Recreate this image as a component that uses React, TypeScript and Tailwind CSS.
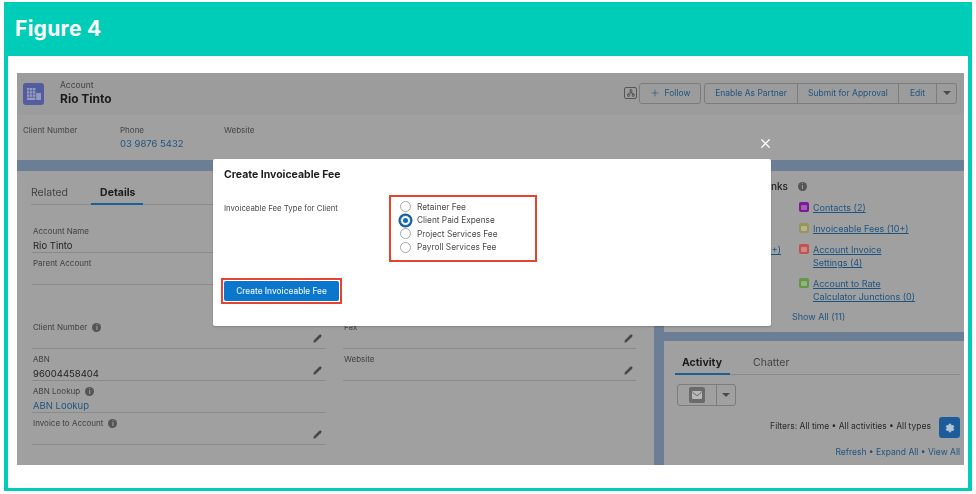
import { Plus, X, Pencil, Settings, Network } from "lucide-react"

const font = "font-['Inter','Liberation_Sans',sans-serif]"

function InfoDot({ className = "ml-[5px]" }: { className?: string }) {
  return (
    <span className={`inline-flex h-[9px] w-[9px] shrink-0 items-center justify-center rounded-full bg-[#555] text-[7px] font-bold leading-none text-[#a0a0a0] ${className}`}>
      i
    </span>
  )
}

function Caret() {
  return <span className="h-0 w-0 border-x-[4px] border-t-[4px] border-x-transparent border-t-[#4a4a4a]" />
}

function Field({ label, value, link, info, edit = true }: { label: string; value?: string; link?: boolean; info?: boolean; edit?: boolean }) {
  return (
    <div className="relative h-[32px] border-b border-[#8a8a8a] pl-[1px] pt-[4px]">
      <div className="flex h-[12px] items-center text-[8px] leading-none text-[#3f3f3f]">
        {label}
        {info && <InfoDot />}
      </div>
      {value && (
        <div className={`mt-[2.5px] text-[9.5px] leading-[12px] ${link ? "text-[#1e5480]" : "text-[#222]"}`}>{value}</div>
      )}
      {edit && (
        <Pencil className="absolute bottom-[5px] right-[3px] h-[9px] w-[9px] fill-[#444] text-[#444]" strokeWidth={1.5} />
      )}
    </div>
  )
}

function QuickLink({ color, lines }: { color: string; lines: string[] }) {
  return (
    <div className="flex gap-[4px]">
      <span className={`mt-[1px] flex h-[10px] w-[10px] shrink-0 items-center justify-center rounded-[2px] ${color}`}>
        <span className="h-[5px] w-[6px] rounded-[1px] bg-white/30" />
      </span>
      <div className="text-[9px] leading-[13px] text-[#1e5480] underline">
        {lines.map((line) => (
          <div key={line}>{line}</div>
        ))}
      </div>
    </div>
  )
}

function Radio({ label, checked }: { label: string; checked?: boolean }) {
  return (
    <div className="flex h-[13.6px] items-center">
      <span
        className={`flex h-[11px] w-[11px] items-center justify-center rounded-full border bg-white ${
          checked ? "border-[#0a6fc2] shadow-[0_0_0_1.5px_#1b5f96]" : "border-[#a8a8a8]"
        }`}
      >
        {checked && <span className="h-[5px] w-[5px] rounded-full bg-[#0a70c5]" />}
      </span>
      <span className="ml-[6px] text-[8.3px] text-[#4a4a4a]">{label}</span>
    </div>
  )
}

export default function App() {
  return (
    <div className={`h-[494px] w-[976px] overflow-hidden bg-white pb-[3px] pl-[4px] pr-[4px] pt-[2px] ${font}`}>
      <div className="flex h-full flex-col bg-[#00cdb7] px-[4px] pb-[3px]">
        <div className="flex h-[54px] items-center pb-[1px] pl-[7px] text-[21px] font-bold tracking-[0.3px] text-white">Figure 4</div>
        <div className="flex-1 bg-white pb-[23px] pl-[9px] pr-[4px] pt-[17px]">
          <div className="relative flex h-[392px] flex-col overflow-hidden bg-[#a0a0a0] blur-[0.3px]">
            {/* record header */}
            <div className="flex h-[42px] shrink-0 items-center bg-[#9c9c9c] pl-[6px] pr-[7px]">
              <div className="flex h-[22px] w-[21px] items-center justify-center rounded-[3px] bg-[#535c9c]">
                <svg viewBox="0 0 14 12" className="h-[12px] w-[14px]" fill="#9499c0">
                  <rect x="0" y="0" width="2.4" height="2.4" />
                  <rect x="3" y="0" width="2.4" height="2.4" />
                  <rect x="6" y="0" width="2.4" height="2.4" />
                  <rect x="0" y="3.2" width="2.4" height="2.4" />
                  <rect x="3" y="3.2" width="2.4" height="2.4" />
                  <rect x="6" y="3.2" width="2.4" height="2.4" />
                  <rect x="0" y="6.4" width="2.4" height="2.4" />
                  <rect x="3" y="6.4" width="2.4" height="2.4" />
                  <rect x="6" y="6.4" width="2.4" height="2.4" />
                  <rect x="0" y="9.6" width="8.4" height="2.4" />
                  <rect x="9.2" y="5" width="4.8" height="7" />
                </svg>
              </div>
              <div className="mb-[3px] ml-[16px]">
                <div className="text-[8.5px] leading-[11px] text-[#444]">Account</div>
                <div className="text-[12px] font-bold leading-[15px] text-[#1c1c1c]">Rio Tinto</div>
              </div>
              <div className="mb-[2px] ml-auto flex h-[21px] items-center text-[8.5px] text-[#1e5480]">
                <span className="mr-[2px] flex h-[12px] w-[13px] items-center justify-center rounded-[2px] border border-[#555]">
                  <Network className="h-[8px] w-[8px] text-[#444]" strokeWidth={2} />
                </span>
                <div className="flex h-[21px] w-[62px] items-center justify-center gap-[5px] rounded-[3px] border border-[#7c7c7c]">
                  <Plus className="h-[10px] w-[10px]" strokeWidth={1.5} />
                  Follow
                </div>
                <div className="ml-[3px] flex h-[21px] items-center rounded-[3px] border border-[#7c7c7c]">
                  <span className="flex h-full w-[92px] items-center justify-center">Enable As Partner</span>
                  <span className="flex h-full w-[101px] items-center justify-center border-l border-[#7c7c7c]">Submit for Approval</span>
                  <span className="flex h-full w-[38px] items-center justify-center border-l border-[#7c7c7c]">Edit</span>
                  <span className="flex h-full w-[20px] items-center justify-center border-l border-[#7c7c7c]">
                    <Caret />
                  </span>
                </div>
              </div>
            </div>

            {/* highlights */}
            <div className="flex h-[45px] shrink-0 bg-[#a0a0a0] pl-[6px] pt-[9px] text-[8px] leading-[12px] text-[#444]">
              <div className="w-[97px]">Client Number</div>
              <div className="w-[104px]">
                Phone
                <div className="mt-[1px] text-[9.5px] leading-[13px] text-[#1e5480]">03 9876 5432</div>
              </div>
              <div>Website</div>
            </div>

            {/* page background band */}
            <div className="flex flex-1 flex-col bg-[#6c7e95] pt-[11px]">
              <div className="flex flex-1 gap-[10px]">
                {/* details */}
                <div className="flex w-[637px] flex-col bg-[#a0a0a0] px-[14px]">
                  <div className="flex h-[34px] items-end border-b border-[#8a8a8a] text-[10.5px]">
                    <span className="mb-[3px] text-[#444]">Related</span>
                    <span className="relative mb-[3px] ml-[32px] font-bold text-[#1c1c1c]">
                      Details
                      <span className="absolute -bottom-[4px] -left-[9px] -right-[8px] h-[2px] bg-[#1f5f94]" />
                    </span>
                  </div>
                  <div className="mt-[16px] grid grid-cols-[293px_293px] gap-x-[18px] pl-[1px]">
                    <div>
                      <Field label="Account Name" value="Rio Tinto" edit={false} />
                      <Field label="Parent Account" edit={false} />
                    </div>
                    <div />
                  </div>
                  <div className="mt-[32px] grid grid-cols-[293px_293px] gap-x-[18px] pl-[1px]">
                    <div>
                      <Field label="Client Number" info />
                      <Field label="ABN" value="96004458404" />
                      <Field label="ABN Lookup" value="ABN Lookup" link info edit={false} />
                      <Field label="Invoice to Account" info />
                    </div>
                    <div>
                      <Field label="Fax" />
                      <Field label="Website" />
                    </div>
                  </div>
                </div>

                {/* right column */}
                <div className="flex flex-1 flex-col gap-[9px]">
                  <div className="h-[161px] bg-[#a0a0a0] pt-[9px]">
                    <div className="flex w-[143px] items-center justify-end whitespace-nowrap text-[10px] font-medium leading-[13px] text-[#222]">
                      Related List Quick Links
                      <InfoDot className="ml-[10px]" />
                    </div>
                    <div className="mt-[8px] grid grid-cols-[135px_1fr] gap-y-[8px]">
                      <div />
                      <QuickLink color="bg-[#7a1a94]" lines={["Contacts (2)"]} />
                      <div />
                      <QuickLink color="bg-[#96965a]" lines={["Invoiceable Fees (10+)"]} />
                      <div className="pr-[18px] text-right text-[9px] leading-[13px] text-[#1e5480] underline">Opportunities (10+)</div>
                      <QuickLink color="bg-[#c2524f]" lines={["Account Invoice", "Settings (4)"]} />
                      <div />
                      <QuickLink color="bg-[#639648]" lines={["Account to Rate", "Calculator Junctions (0)"]} />
                    </div>
                    <div className="ml-[128px] mt-[8px] text-[9px] leading-[12px] text-[#1e5480]">Show All (11)</div>
                  </div>
                  <div className="flex-1 bg-[#a0a0a0] pl-[11px] pr-[4px]">
                    <div className="flex h-[34px] items-end border-b border-[#8a8a8a] text-[10.5px]">
                      <span className="relative mb-[3px] ml-[7px] font-bold text-[#1c1c1c]">
                        Activity
                        <span className="absolute -bottom-[4px] -left-[7px] -right-[8px] h-[2px] bg-[#1f5f94]" />
                      </span>
                      <span className="mb-[3px] ml-[31px] text-[#444]">Chatter</span>
                    </div>
                    <div className="ml-[2px] mt-[9px] flex h-[22px] w-[59px] rounded-[3px] border border-[#7c7c7c]">
                      <span className="flex w-[38px] items-center justify-center">
                        <span className="flex h-[16px] w-[16px] items-center justify-center rounded-[2px] bg-[#6b6b6b]">
                          <svg viewBox="0 0 10 8" className="h-[8px] w-[10px]">
                            <rect width="10" height="8" rx="1" fill="#b9b9b9" />
                            <path d="M0.5 1.2 5 4.8 9.5 1.2" fill="none" stroke="#6b6b6b" strokeWidth="1" />
                          </svg>
                        </span>
                      </span>
                      <span className="flex flex-1 items-center justify-center border-l border-[#7c7c7c]">
                        <Caret />
                      </span>
                    </div>
                    <div className="mt-[11px] flex h-[21px] items-center justify-end text-[8.5px] text-[#2a2a2a]">
                      <span className="mb-[2px]">Filters: All time • All activities • All types</span>
                      <span className="ml-[8px] flex h-[21px] w-[21px] items-center justify-center rounded-[3px] bg-[#1c5c9a]">
                        <Settings className="h-[10px] w-[10px] fill-[#b7c6d6] text-[#b7c6d6]" />
                      </span>
                    </div>
                    <div className="mt-[8px] text-right text-[8.5px] leading-[12px] text-[#1e5480]">Refresh • Expand All • View All</div>
                  </div>
                </div>
              </div>
            </div>

            {/* modal */}
            <X className="absolute left-[741px] top-[63px] h-[15px] w-[15px] text-white" strokeWidth={2} />
            <div className="absolute left-[196px] top-[86px] h-[167px] w-[558px] rounded-[2px] bg-white pl-[8px] pt-[9px] shadow-[0_1px_2px_rgba(0,0,0,0.2)]">
              <div className="pl-[3px] text-[10.5px] font-bold leading-[14px] text-[#222]">Create Invoiceable Fee</div>
              <div className="mt-[13px] flex">
                <div className="w-[168px] pl-[3px] pt-[7px] text-[7.8px] leading-[12px] text-[#4a4a4a]">Invoiceable Fee Type for Client</div>
                <div className="h-[67px] w-[148px] border-2 border-[#e8432f] pl-[9px] pt-[3px]">
                  <Radio label="Retainer Fee" />
                  <Radio label="Client Paid Expense" checked />
                  <Radio label="Project Services Fee" />
                  <Radio label="Payroll Services Fee" />
                </div>
              </div>
              <div className="mt-[16px] h-[26px] w-[121px] border-2 border-[#e8432f] p-[1px]">
                <div className="flex h-full items-center justify-center rounded-[2px] bg-[#0a76cc] text-[8.3px] font-medium text-[#e8f2fa]">
                  Create Invoiceable Fee
                </div>
              </div>
            </div>
          </div>
        </div>
      </div>
    </div>
  )
}
